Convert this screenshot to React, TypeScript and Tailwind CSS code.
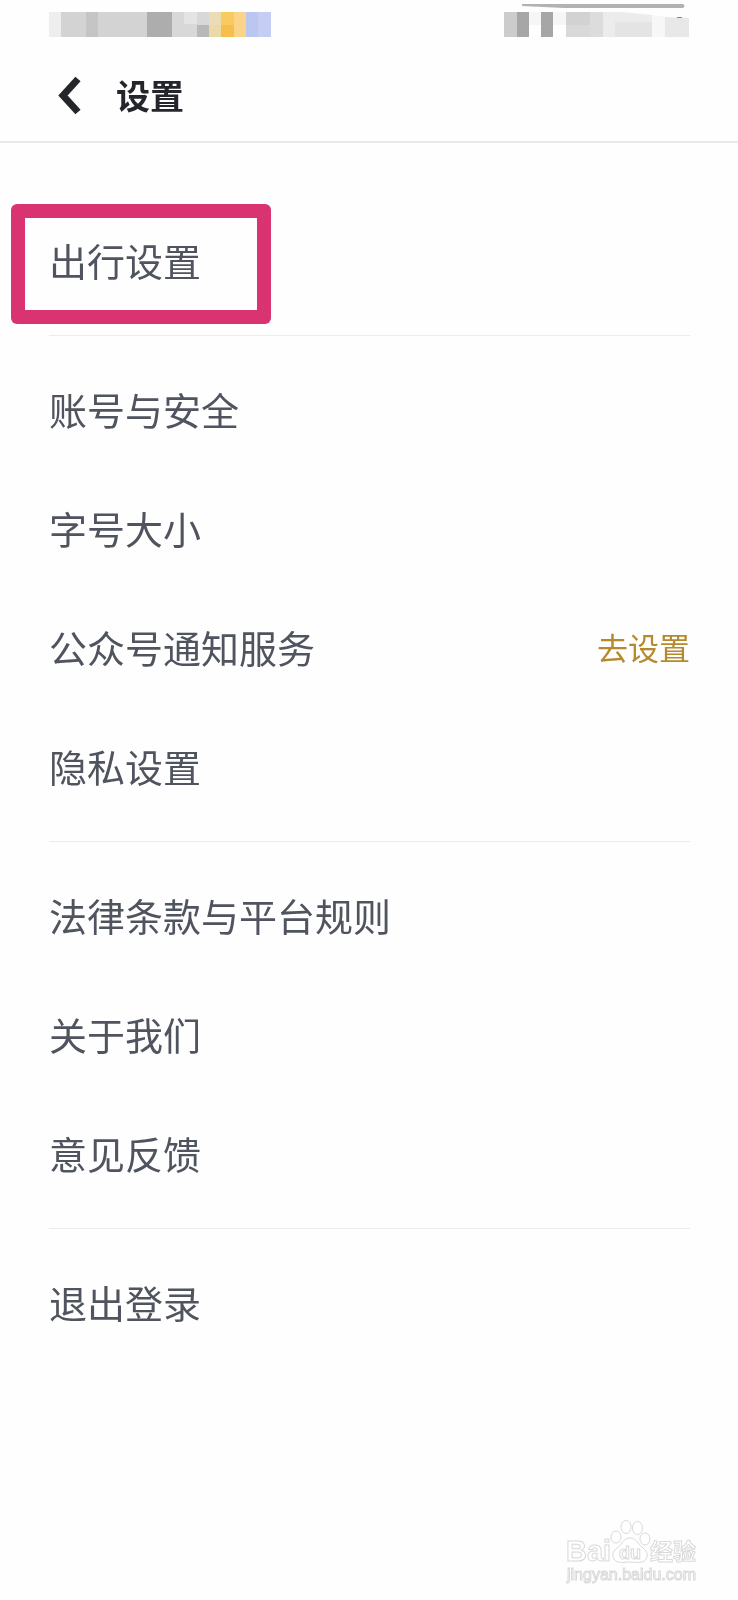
interface SettingItem {
  label: string
  action?: string
  highlighted?: boolean
}

const sections: SettingItem[][] = [
  [{ label: '出行设置', highlighted: true }],
  [
    { label: '账号与安全' },
    { label: '字号大小' },
    { label: '公众号通知服务', action: '去设置' },
    { label: '隐私设置' }
  ],
  [{ label: '法律条款与平台规则' }, { label: '关于我们' }, { label: '意见反馈' }],
  [{ label: '退出登录' }]
]

function StatusBar() {
  return (
    <div className="flex h-12 items-start justify-between px-12">
      {/* Carrier and network icons, pixelated */}
      <svg width="223" height="48" viewBox="0 0 223 48" aria-hidden="true">
        <rect x="1" y="12" width="12" height="25" fill="#eeeeee" />
        <rect x="13" y="12" width="25" height="25" fill="#d3d3d3" />
        <rect x="38" y="12" width="12" height="25" fill="#c5c5c5" />
        <rect x="50" y="12" width="49" height="25" fill="#d3d3d3" />
        <rect x="99" y="12" width="25" height="25" fill="#adadad" />
        <rect x="124" y="12" width="25" height="25" fill="#d8d8d8" />
        <rect x="136" y="12" width="13" height="12" fill="#e4e4e4" />
        <rect x="149" y="12" width="12" height="13" fill="#d8d8d8" />
        <rect x="149" y="25" width="12" height="12" fill="#b8b8b8" />
        <rect x="161" y="12" width="12" height="13" fill="#e9dcb6" />
        <rect x="161" y="25" width="12" height="12" fill="#ecd9a8" />
        <rect x="173" y="12" width="13" height="13" fill="#f8ca5f" />
        <rect x="173" y="25" width="13" height="12" fill="#f6bf4b" />
        <rect x="186" y="12" width="12" height="25" fill="#fad488" />
        <rect x="198" y="12" width="12" height="25" fill="#bcc6f2" />
        <rect x="210" y="12" width="13" height="25" fill="#c6cdf4" />
      </svg>
      {/* Clock and battery, pixelated */}
      <svg width="186" height="48" viewBox="0 0 186 48" aria-hidden="true">
        <rect x="0" y="12" width="13" height="25" fill="#cccccc" />
        <rect x="13" y="12" width="12" height="25" fill="#a6a6a6" />
        <rect x="37" y="12" width="12" height="25" fill="#a6a6a6" />
        <rect x="25" y="12" width="12" height="13" fill="#f6f6f6" />
        <rect x="49" y="12" width="13" height="13" fill="#f6f6f6" />
        <rect x="62" y="12" width="24" height="13" fill="#d2d2d2" />
        <rect x="62" y="25" width="24" height="12" fill="#d9d9d9" />
        <rect x="86" y="12" width="13" height="25" fill="#dcdcdc" />
        <path d="M99 12L118 12L148 15V37H99Z" fill="#ececec" />
        <rect x="111" y="22" width="37" height="15" fill="#e4e4e4" />
        <path d="M148 15L161 17V37H148Z" fill="#f7f7f7" />
        <path d="M161 17L185 18V37H161Z" fill="#e8e8e8" />
        <path d="M18 4L179 4Q182 6 179 8H60L18 6Z" fill="#b2b2b2" />
        <rect x="173" y="17" width="5" height="1" fill="#888888" />
      </svg>
    </div>
  )
}

function SettingRow({ item }: { item: SettingItem }) {
  return (
    <li className="relative flex h-[119px] items-center justify-between">
      <a href="#" className="text-[38px] leading-[56px] text-[#4f545e]">
        {item.label}
      </a>
      {item.action && (
        <a href="#" className="text-[31px] leading-[56px] text-[#b48a2c]">
          {item.action}
        </a>
      )}
      {item.highlighted && (
        <span className="pointer-events-none absolute top-1 -left-[38px] h-[120px] w-[260px] rounded-md bg-[#db3372] p-[14px] mix-blend-multiply">
          <span className="block h-full bg-white" />
        </span>
      )}
    </li>
  )
}

function Watermark() {
  return (
    <svg
      width="140"
      height="68"
      viewBox="0 0 140 68"
      fill="#ffffff"
      stroke="#d9d9d9"
      strokeWidth="1"
      fontFamily="'Liberation Sans', 'Noto Sans CJK SC', sans-serif"
    >
      <text x="0" y="41" fontSize="29" fontWeight="700">Bai</text>
      <ellipse cx="50" cy="17" rx="5" ry="6" />
      <ellipse cx="60" cy="7" rx="5" ry="6.5" />
      <ellipse cx="71.5" cy="8" rx="5" ry="6.5" />
      <ellipse cx="79" cy="19" rx="5" ry="6" />
      <path d="M64 18C57 18 57 24 51 28C46 32 46 36 48 39C51 44 57 42 64 42C71 42 77 44 80 39C82 36 82 32 77 28C71 24 71 18 64 18Z" />
      <text x="53" y="39" fontSize="18" fontWeight="700">du</text>
      <text x="84" y="40" fontSize="23" fontWeight="700">经验</text>
      <text x="1" y="60" fontSize="16">jingyan.baidu.com</text>
    </svg>
  )
}

export default function App() {
  return (
    <div className="flex min-h-screen flex-col bg-[#fefefe] font-['Noto_Sans_CJK_SC',sans-serif]">
      <StatusBar />
      <header className="flex h-[95px] items-center border-b-2 border-[#e9e9ea] pl-14">
        <button type="button" aria-label="返回" className="mr-8">
          <svg width="28" height="40" viewBox="0 0 28 40" fill="none" stroke="#25262b" strokeWidth="7">
            <path d="M22 4L7 20.5L22 37" />
          </svg>
        </button>
        <h1 className="text-[34px] leading-[48px] font-bold text-[#25262b]">设置</h1>
      </header>

      <main className="pt-11 pr-12 pl-[49px]">
        {sections.map((items, index) => (
          <ul
            key={index}
            className="border-b border-[#e9edee] pt-[13px] pb-4 last:border-b-0"
          >
            {items.map(item => (
              <SettingRow key={item.label} item={item} />
            ))}
          </ul>
        ))}
      </main>

      <footer className="mt-auto flex justify-end pr-8 pb-3">
        <Watermark />
      </footer>
    </div>
  )
}
